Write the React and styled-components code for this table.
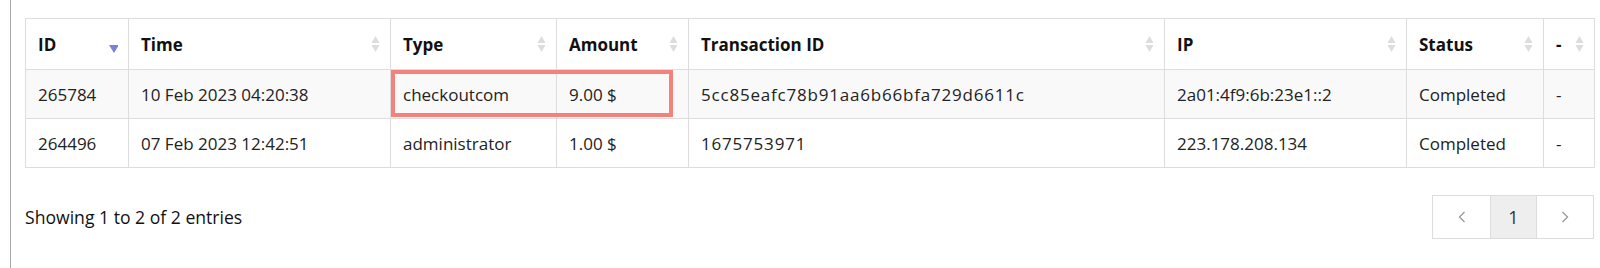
import React from 'react'
import styled, { createGlobalStyle } from 'styled-components'

const GlobalStyle = createGlobalStyle`
    body {
        margin: 0;
        background: #fff;
        font-family: "Open Sans", "Noto Sans", sans-serif;
    }
`

const Page = styled.div`
    margin-left: 10px;
    border-left: 1px solid #aaa;
    padding: 18px 7px 0 14px;
    height: 268px;
    box-sizing: border-box;
`

const Table = styled.table`
    border-collapse: collapse;
    table-layout: fixed;
    width: 1569px;
    font-size: 17px;
    color: #222;
`

const HeadCell = styled.th`
    height: 50px;
    padding: 0 10px 0 12px;
    border: 1px solid #ddd;
    text-align: left;
    font-weight: 700;
    color: #111;
`

const HeadInner = styled.div`
    display: flex;
    align-items: center;
    justify-content: space-between;
`

const Row = styled.tr`
    background: ${(props) => (props.$striped ? '#f9f9f9' : '#fff')};
`

const Cell = styled.td`
    position: relative;
    height: 48px;
    padding: 0 12px;
    border: 1px solid #ddd;
    white-space: nowrap;
    letter-spacing: ${(props) => (props.$wide ? '0.8px' : 'normal')};
`

const Highlight = styled.span`
    position: absolute;
    left: 0;
    top: 0;
    width: 282px;
    height: 47px;
    box-sizing: border-box;
    border: 4px solid #f3827d;
    pointer-events: none;
`

const Footer = styled.div`
    display: flex;
    align-items: center;
    justify-content: space-between;
    width: 1569px;
    margin-top: 27px;
    font-size: 17.6px;
    color: #111;
`

const Pager = styled.div`
    display: flex;
    border: 1px solid #ddd;
    height: 42px;
`

const PageButton = styled.div`
    display: flex;
    align-items: center;
    justify-content: center;
    width: ${(props) => props.$width}px;
    background: ${(props) => (props.$active ? '#eee' : '#fff')};
    border-left: ${(props) => (props.$first ? 'none' : '1px solid #ddd')};
    color: #333;
    font-size: 18px;
`

const SortIcon = ({ active }) => (
    <svg width="9" height="18" viewBox="0 0 9 18">
        {!active && <polygon points="4.5,1 8.5,8 0.5,8" fill="#ddd" />}
        <polygon
            points={active ? '0,10 10,10 5,18' : '0.5,10 8.5,10 4.5,17'}
            fill={active ? '#7b80d9' : '#ddd'}
        />
    </svg>
)

const Chevron = ({ dir }) => (
    <svg width="8" height="12" viewBox="0 0 8 12">
        <polyline
            points={dir === 'left' ? '6.5,1 1.5,6 6.5,11' : '1.5,1 6.5,6 1.5,11'}
            fill="none"
            stroke="#999"
            strokeWidth="1.3"
        />
    </svg>
)

const columns = [
    { title: 'ID', width: 103 },
    { title: 'Time', width: 262 },
    { title: 'Type', width: 166 },
    { title: 'Amount', width: 132 },
    { title: 'Transaction ID', width: 476 },
    { title: 'IP', width: 242 },
    { title: 'Status', width: 137 },
    { title: '-', width: 51 }
]

const rows = [
    ['265784', '10 Feb 2023 04:20:38', 'checkoutcom', '9.00 $', '5cc85eafc78b91aa6b66bfa729d6611c', '2a01:4f9:6b:23e1::2', 'Completed', '-'],
    ['264496', '07 Feb 2023 12:42:51', 'administrator', '1.00 $', '1675753971', '223.178.208.134', 'Completed', '-']
]

export default function App() {
    return (
        <Page>
            <GlobalStyle />
            <Table>
                <colgroup>
                    {columns.map((col) => (
                        <col key={col.title} style={{ width: col.width }} />
                    ))}
                </colgroup>
                <thead>
                    <tr>
                        {columns.map((col, i) => (
                            <HeadCell key={col.title}>
                                <HeadInner>
                                    <span>{col.title}</span>
                                    <SortIcon active={i === 0} />
                                </HeadInner>
                            </HeadCell>
                        ))}
                    </tr>
                </thead>
                <tbody>
                    {rows.map((row, r) => (
                        <Row key={row[0]} $striped={r === 0}>
                            {row.map((value, c) => (
                                <Cell key={c} $wide={c === 4}>
                                    {r === 0 && c === 2 && <Highlight />}
                                    {value}
                                </Cell>
                            ))}
                        </Row>
                    ))}
                </tbody>
            </Table>

            <Footer>
                <span>Showing 1 to 2 of 2 entries</span>
                <Pager>
                    <PageButton $first $width={57}><Chevron dir="left" /></PageButton>
                    <PageButton $active $width={45}>1</PageButton>
                    <PageButton $width={56}><Chevron dir="right" /></PageButton>
                </Pager>
            </Footer>
        </Page>
    )
}
